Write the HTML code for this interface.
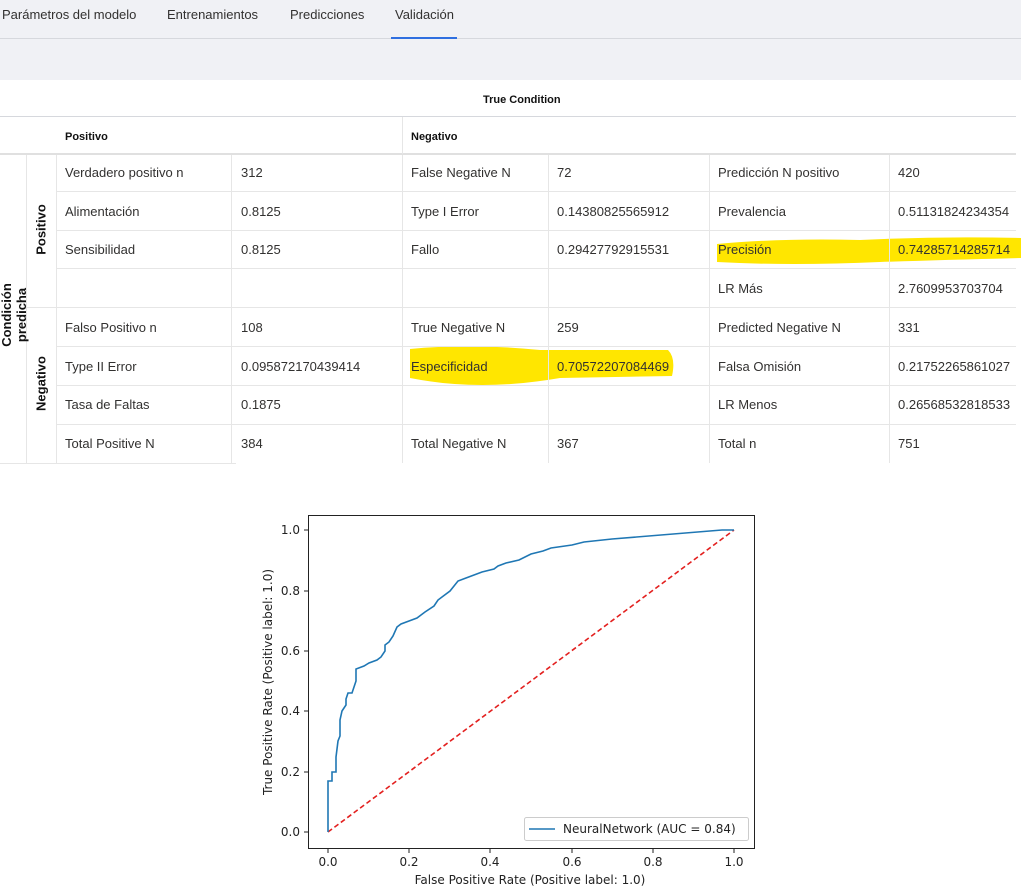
<!DOCTYPE html><html><head><meta charset="utf-8"><style>
*{margin:0;padding:0;box-sizing:border-box}
body{width:1021px;height:893px;background:#fff;font-family:"Liberation Sans",sans-serif;font-size:13px;color:#323130;position:relative;overflow:hidden}
.a{position:absolute;white-space:nowrap}
.h{position:absolute;height:1px;background:#e6e6e6}
.v{position:absolute;width:1px;background:#e6e6e6}
.t{position:absolute;font-size:13px;line-height:16px}
.b{font-weight:bold;font-size:11px}
.rot{position:absolute;transform:rotate(-90deg);transform-origin:center;font-weight:bold;font-size:13px;color:#111}
</style></head><body>
<div class="a" style="left:0;top:0;width:1021px;height:80px;background:#f0f1f5"></div>
<div class="h" style="left:0;top:38px;width:1021px;background:#d6d8dd"></div>
<div class="a" style="left:391px;top:37px;width:66px;height:2px;background:#2f6fe0"></div>
<div class="t" style="left:2px;top:7px">Parámetros del modelo</div>
<div class="t" style="left:167px;top:7px">Entrenamientos</div>
<div class="t" style="left:290px;top:7px">Predicciones</div>
<div class="t" style="left:395px;top:7px">Validación</div>
<svg class="a" style="left:0;top:0" width="1021" height="893">
<path d="M410 349 Q470 343 540 350 L668 350 Q676 358 672 376 L560 378 Q480 392 410 378 Z" fill="#ffe600"/>
<path d="M717 244 Q780 238 860 240 Q940 236 1021 238 L1021 258 Q940 260 880 262 Q790 266 717 262 Z" fill="#ffe600"/>
</svg>
<div class="t b" style="left:483px;top:92px;color:#111">True Condition</div>
<div class="h" style="left:0;top:116px;width:1016px;background:#d6d8dd"></div>
<div class="t b" style="left:65px;top:129px;color:#111">Positivo</div>
<div class="t b" style="left:411px;top:129px;color:#111">Negativo</div>
<div class="h" style="left:0;top:153px;width:1016px;height:2px;background:#e0e0e0"></div>
<div class="v" style="left:402px;top:117px;height:37px"></div>
<!-- row lines -->
<div class="h" style="left:57px;top:191px;width:959px"></div>
<div class="h" style="left:57px;top:230px;width:959px"></div>
<div class="h" style="left:57px;top:268px;width:959px"></div>
<div class="h" style="left:27px;top:307px;width:989px"></div>
<div class="h" style="left:57px;top:346px;width:959px"></div>
<div class="h" style="left:57px;top:385px;width:959px"></div>
<div class="h" style="left:57px;top:424px;width:959px"></div>
<div class="h" style="left:0;top:463px;width:236px"></div>
<div class="v" style="left:26px;top:155px;height:308px"></div>
<div class="v" style="left:56px;top:155px;height:308px"></div>
<div class="v" style="left:231px;top:155px;height:308px"></div>
<div class="v" style="left:402px;top:155px;height:308px"></div>
<div class="v" style="left:548px;top:155px;height:308px"></div>
<div class="v" style="left:709px;top:155px;height:308px"></div>
<div class="v" style="left:889px;top:155px;height:308px"></div>
<div class="rot" style="left:-45px;top:300px;width:118px;text-align:center">Condición predicha</div>
<div class="rot" style="left:5px;top:222px;width:72px;text-align:center">Positivo</div>
<div class="rot" style="left:5px;top:376px;width:72px;text-align:center">Negativo</div>
<!-- rows -->
<div class="t" style="left:65px;top:165px">Verdadero positivo n</div><div class="t" style="left:241px;top:165px">312</div><div class="t" style="left:411px;top:165px">False Negative N</div><div class="t" style="left:557px;top:165px">72</div><div class="t" style="left:718px;top:165px">Predicción N positivo</div><div class="t" style="left:898px;top:165px">420</div>
<div class="t" style="left:65px;top:204px">Alimentación</div><div class="t" style="left:241px;top:204px">0.8125</div><div class="t" style="left:411px;top:204px">Type I Error</div><div class="t" style="left:557px;top:204px">0.14380825565912</div><div class="t" style="left:718px;top:204px">Prevalencia</div><div class="t" style="left:898px;top:204px">0.51131824234354</div>
<div class="t" style="left:65px;top:242px">Sensibilidad</div><div class="t" style="left:241px;top:242px">0.8125</div><div class="t" style="left:411px;top:242px">Fallo</div><div class="t" style="left:557px;top:242px">0.29427792915531</div><div class="t" style="left:718px;top:242px">Precisión</div><div class="t" style="left:898px;top:242px">0.74285714285714</div>
<div class="t" style="left:718px;top:281px">LR Más</div><div class="t" style="left:898px;top:281px">2.7609953703704</div>
<div class="t" style="left:65px;top:320px">Falso Positivo n</div><div class="t" style="left:241px;top:320px">108</div><div class="t" style="left:411px;top:320px">True Negative N</div><div class="t" style="left:557px;top:320px">259</div><div class="t" style="left:718px;top:320px">Predicted Negative N</div><div class="t" style="left:898px;top:320px">331</div>
<div class="t" style="left:65px;top:359px">Type II Error</div><div class="t" style="left:241px;top:359px">0.095872170439414</div><div class="t" style="left:411px;top:359px">Especificidad</div><div class="t" style="left:557px;top:359px">0.70572207084469</div><div class="t" style="left:718px;top:359px">Falsa Omisión</div><div class="t" style="left:898px;top:359px">0.21752265861027</div>
<div class="t" style="left:65px;top:397px">Tasa de Faltas</div><div class="t" style="left:241px;top:397px">0.1875</div><div class="t" style="left:718px;top:397px">LR Menos</div><div class="t" style="left:898px;top:397px">0.26568532818533</div>
<div class="t" style="left:65px;top:436px">Total Positive N</div><div class="t" style="left:241px;top:436px">384</div><div class="t" style="left:411px;top:436px">Total Negative N</div><div class="t" style="left:557px;top:436px">367</div><div class="t" style="left:718px;top:436px">Total n</div><div class="t" style="left:898px;top:436px">751</div>
<div class="a" style="left:236px;top:463px;width:576px;height:6px;background:#fff"></div>
<!-- chart -->
<svg class="a" style="left:0;top:0" width="1021" height="893" font-family="DejaVu Sans, sans-serif" font-size="12" fill="#222">
<rect x="308.5" y="515.5" width="446" height="333" fill="none" stroke="#222" stroke-width="1"/>
<g stroke="#222">
<line x1="328" y1="849" x2="328" y2="853"/><line x1="409" y1="849" x2="409" y2="853"/><line x1="490" y1="849" x2="490" y2="853"/><line x1="572" y1="849" x2="572" y2="853"/><line x1="653" y1="849" x2="653" y2="853"/><line x1="734" y1="849" x2="734" y2="853"/>
<line x1="304" y1="832" x2="308" y2="832"/><line x1="304" y1="772" x2="308" y2="772"/><line x1="304" y1="711" x2="308" y2="711"/><line x1="304" y1="651" x2="308" y2="651"/><line x1="304" y1="591" x2="308" y2="591"/><line x1="304" y1="530" x2="308" y2="530"/>
</g>
<g text-anchor="middle"><text x="328" y="866">0.0</text><text x="409" y="866">0.2</text><text x="490" y="866">0.4</text><text x="572" y="866">0.6</text><text x="653" y="866">0.8</text><text x="734" y="866">1.0</text>
<text x="530" y="884">False Positive Rate (Positive label: 1.0)</text></g>
<g text-anchor="end"><text x="300" y="836">0.0</text><text x="300" y="776">0.2</text><text x="300" y="715">0.4</text><text x="300" y="655">0.6</text><text x="300" y="595">0.8</text><text x="300" y="534">1.0</text></g>
<text transform="translate(272,682) rotate(-90)" text-anchor="middle">True Positive Rate (Positive label: 1.0)</text>
<line x1="328" y1="832" x2="734" y2="530" stroke="#e3201f" stroke-width="1.6" stroke-dasharray="5,3"/>
<polyline fill="none" stroke="#1f77b4" stroke-width="1.6" points="328,832 328,781 332,781 332,772 336,772 336,757 338,741 340,736 340,720 342,711 346,705 346,699 348,693 352,693 354,687 356,681 356,669 364,666 369,663 377,660 381,657 385,651 385,645 389,642 393,636 397,627 401,624 409,621 417,618 421,615 425,612 434,606 438,600 442,597 450,591 458,581 466,578 474,575 482,572 494,569 498,566 506,563 519,560 531,554 543,551 551,548 572,545 584,542 612,539 722,530 734,530"/>
<rect x="524.5" y="817.5" width="224" height="23" rx="2" fill="#fff" stroke="#ccc"/>
<line x1="529" y1="829" x2="555" y2="829" stroke="#1f77b4" stroke-width="1.6"/>
<text x="563" y="833">NeuralNetwork (AUC = 0.84)</text>
</svg>
</body></html>
